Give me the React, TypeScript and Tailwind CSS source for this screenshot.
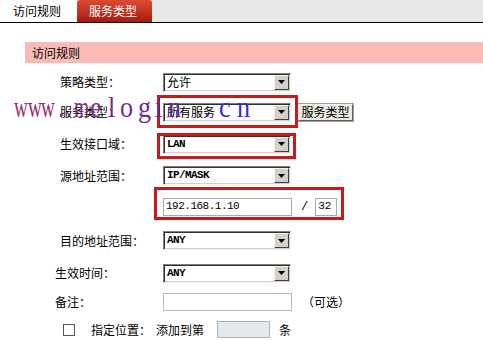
import React from "react";

const cjk = { fontFamily: '"Noto Sans CJK SC", "Noto Sans", sans-serif' };
const mono = { fontFamily: '"Liberation Mono", "DejaVu Sans Mono", monospace' };

/* watermark letters: [char, left x] */
const mark: [string, number][] = [
  ["w", 14], ["w", 27.5], ["w", 41], [".", 58], ["m", 74], ["e", 90], ["l", 108],
  ["o", 120], ["g", 138], ["i", 155], ["n", 168], [".", 204], ["c", 219], ["n", 237],
];

function markColor(i: number) {
  const t = i / (mark.length - 1);
  const r = Math.round(170 + (64 - 170) * t);
  const g = 44;
  const b = Math.round(104 + (190 - 104) * t);
  return `rgb(${r},${g},${b})`;
}

function Select({ value, isMono }: { value: string; isMono?: boolean }) {
  return (
    <div className="flex h-[19px] w-[128px] border border-t-[#808080] border-l-[#808080] border-b-[#f4f4f4] border-r-[#f4f4f4] bg-white shadow-[inset_1px_1px_0_#303030,inset_-1px_-1px_0_#d4d0c8]">
      <div
        className="flex flex-1 items-center pl-[3px] text-[12px] leading-none text-black"
        style={isMono ? { ...mono, fontSize: 11, letterSpacing: "-0.6px", fontWeight: 700 } : cjk}
      >
        {value}
      </div>
      <div className="my-[1px] mr-[1px] flex w-[15px] items-center justify-center border border-t-[#f4f4f4] border-l-[#f4f4f4] border-b-[#404040] border-r-[#404040] bg-[#d4d0c8]">
        <svg width="7" height="4" viewBox="0 0 7 4">
          <path d="M0 0h7L3.5 4z" fill="#000" />
        </svg>
      </div>
    </div>
  );
}

function Row({
  h,
  label,
  pl = 60,
  children,
}: {
  h: number;
  label: string;
  pl?: number;
  children?: React.ReactNode;
}) {
  return (
    <div className="flex items-center" style={{ height: h }}>
      <div
        className="w-[163px] shrink-0 text-[12px] leading-none text-black"
        style={{ ...cjk, paddingLeft: pl }}
      >
        {label}
      </div>
      {children}
    </div>
  );
}

export default function App() {
  return (
    <div className="relative h-[341px] w-[483px] overflow-hidden bg-white" style={cjk}>
      {/* tab bar */}
      <div className="flex h-[23px] border-b border-black bg-[#e8e8e8]">
        <div className="flex h-[22px] w-[77px] items-center bg-white pl-[13px] text-[12px] text-black">
          访问规则
        </div>
        <div className="flex h-[22px] w-[75px] items-center rounded-t-[3px] bg-gradient-to-b from-[#dc4a34] to-[#a8180e] pl-[12px] text-[12px] text-white">
          服务类型
        </div>
      </div>

      {/* section header */}
      <div className="ml-[25px] mt-[19px] flex h-[21px] items-center bg-[#fbbab5] pl-[7px] text-[12px] text-black">
        访问规则
      </div>

      {/* form */}
      <div className="mt-[4px] flex flex-col">
        <Row h={30} label="策略类型：">
          <Select value="允许" />
        </Row>
        <Row h={30} label="服务类型：">
          <Select value="所有服务" />
          <button
            type="button"
            className="ml-[7px] flex h-[17px] w-[55px] items-center justify-center border border-t-[#f4f4f4] border-l-[#f4f4f4] border-b-[#606060] border-r-[#606060] bg-[#ece9e2] text-[12px] leading-none text-black shadow-[0_0_0_1px_#a0a0a0]"
          >
            服务类型
          </button>
        </Row>
        <Row h={34} label="生效接口域：">
          <Select value="LAN" isMono />
        </Row>
        <Row h={29} label="源地址范围：">
          <Select value="IP/MASK" isMono />
        </Row>
        <Row h={33} label="">
          <div
            className="flex h-[18px] w-[129px] items-center border border-[#a5acb2] bg-white pl-[2px] text-[11px] leading-none text-black"
            style={{ ...mono, letterSpacing: "-0.5px" }}
          >
            192.168.1.10
          </div>
          <span className="ml-[9px] text-[12px] leading-none text-black" style={mono}>
            /
          </span>
          <div
            className="ml-[7px] flex h-[18px] w-[22px] items-center border border-[#a5acb2] bg-white pl-[2px] text-[11px] leading-none text-black"
            style={mono}
          >
            32
          </div>
        </Row>
        <Row h={35} label="目的地址范围：">
          <Select value="ANY" isMono />
        </Row>
        <Row h={30} label="生效时间：" pl={55}>
          <Select value="ANY" isMono />
        </Row>
        <Row h={28} label="备注：" pl={55}>
          <div className="h-[18px] w-[129px] border border-[#b8bcc0] bg-white" />
          <span className="ml-[10px] text-[12px] leading-none text-black">（可选）</span>
        </Row>
        <div className="flex h-[27px] items-center text-[12px] leading-none text-black">
          <div className="ml-[63px] h-[12px] w-[12px] border border-[#555] bg-white" />
          <span className="ml-[16px]">指定位置：</span>
          <span className="ml-[5px]">添加到第</span>
          <div className="ml-[13px] h-[17px] w-[53px] border border-[#b0b4b8] bg-[#e4e9ed]" />
          <span className="ml-[9px]">条</span>
        </div>
      </div>

      {/* annotation boxes */}
      <div className="absolute left-[157px] top-[95px] h-[33px] w-[141px] border-[3px] border-[#cc1818]" />
      <div className="absolute left-[157px] top-[133px] h-[26px] w-[139px] border-[3px] border-[#cc1818]" />
      <div className="absolute left-[154px] top-[187px] h-[33px] w-[190px] border-[3px] border-[#cc1818]" />

      {/* watermark */}
      <div
        className="pointer-events-none absolute left-0 top-[93px] h-[32px] w-[483px] text-[29px] leading-none"
        style={{ fontFamily: '"Liberation Serif", "Times New Roman", serif' }}
      >
        {mark.map(([ch, x], i) => (
          <span
            key={i}
            className={
              ch === "w" || ch === "m"
                ? "absolute top-0 origin-left scale-x-[0.66]"
                : "absolute top-0 origin-left scale-x-90"
            }
            style={{ left: x, color: markColor(i) }}
          >
            {ch}
          </span>
        ))}
      </div>
    </div>
  );
}
